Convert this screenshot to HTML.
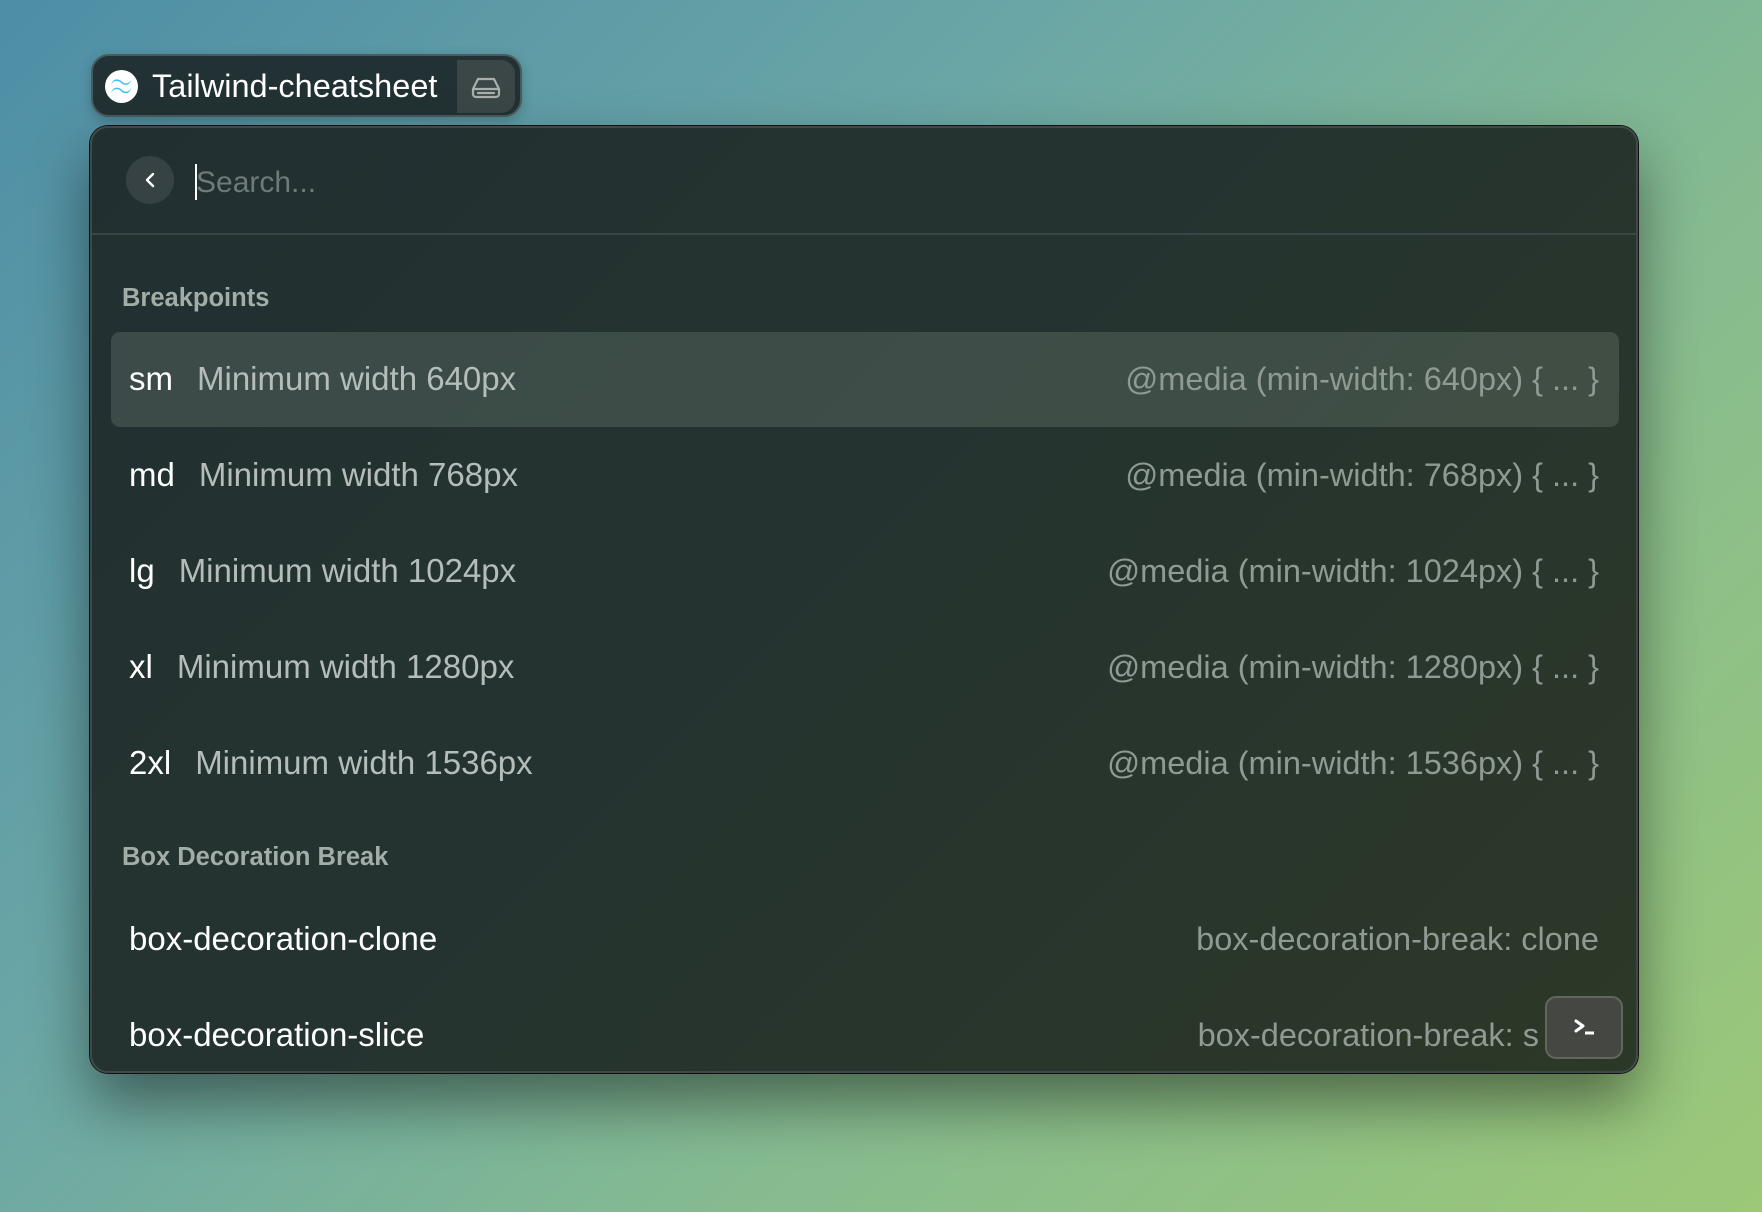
<!DOCTYPE html>
<html><head><meta charset="utf-8"><style>
*{margin:0;padding:0;box-sizing:border-box}
html,body{width:1762px;height:1212px;overflow:hidden}
body{font-family:"Liberation Sans",sans-serif;position:relative;
background:linear-gradient(135deg,#4e8ea6 0%,#6aa6a6 35%,#86bb90 65%,#9cc877 100%);}
.pill{position:absolute;left:91px;top:54px;width:431px;height:63px;border-radius:18px;background:#223234;border:2px solid #4b5a5c;box-shadow:0 4px 12px rgba(0,0,0,.2)}
.pill .logo{position:absolute;left:12px;top:14px;width:33px;height:33px;border-radius:50%;background:#fff}
.pill .t{position:absolute;left:59px;top:11px;font-size:32.5px;color:#fff;line-height:38px}
.pill .b{position:absolute;left:364px;top:4px;width:58px;height:53px;background:#3a4746;border-radius:0 14px 14px 0}
.panel{position:absolute;left:90px;top:126px;width:1548px;height:947px;border-radius:18px;
background:linear-gradient(135deg,#212f31 0%,#253330 45%,#2c3827 100%);border:2px solid #3d4a48;
box-shadow:0 0 0 1px #111,0 30px 60px rgba(0,0,0,.45);overflow:hidden}
.back{position:absolute;left:34px;top:28px;width:48px;height:48px;border-radius:50%;background:#364244}
.caret{position:absolute;left:103px;top:36px;width:2px;height:36px;background:#fff}
.search{position:absolute;left:104px;top:35px;font-size:30px;color:#6f7a78;line-height:40px}
.div{position:absolute;left:0;right:0;top:105px;height:2px;background:#3a4645}
.h{position:absolute;left:30px;font-size:25.5px;font-weight:bold;color:#a3ada8;line-height:30px}
.row{position:absolute;left:19px;width:1508px;height:95px;border-radius:9px}
.row.sel{background:rgba(110,125,115,.35)}
.row .l{position:absolute;left:18px;top:28px;font-size:33px;line-height:38px;color:#fff}
.row .l span{color:#b4bdb9;margin-left:24px}
.row .r{position:absolute;right:20px;top:28px;font-size:32.5px;line-height:38px;color:#8f9a93;white-space:nowrap}
.term{position:absolute;left:1453px;top:868px;width:78px;height:63px;border-radius:11px;background:#454842;border:2px solid #62665f}
</style></head><body>
<div class="pill">
 <div class="logo"><svg width="33" height="33" viewBox="0 0 32 32"><path d="M6 14c1.6-4.5 4.3-5.6 7.6-4.5 2.2.7 3.2 2.8 5.4 3.3 2.7.7 4.9-.5 6.6-3.3-1.6 4.5-4.3 5.6-7.6 4.5-2.2-.7-3.2-2.8-5.4-3.3-2.7-.7-4.9.5-6.6 3.3zM6 22c1.6-4.5 4.3-5.6 7.6-4.5 2.2.7 3.2 2.8 5.4 3.3 2.7.7 4.9-.5 6.6-3.3-1.6 4.5-4.3 5.6-7.6 4.5-2.2-.7-3.2-2.8-5.4-3.3-2.7-.7-4.9.5-6.6 3.3z" fill="#38bdf8"/></svg></div>
 <div class="t">Tailwind-cheatsheet</div>
 <div class="b"><svg width="58" height="53" viewBox="0 0 58 53"><path d="M16 29l5-10h16l5 10v5a3 3 0 0 1-3 3H19a3 3 0 0 1-3-3z M16 29h26 M21 33h16" fill="none" stroke="#a8b0ad" stroke-width="2.2" stroke-linejoin="round" stroke-linecap="round"/></svg></div>
</div>
<div class="panel">
 <div class="back"><svg width="48" height="48" viewBox="0 0 48 48"><path d="M27 18l-6 6 6 6" fill="none" stroke="#fff" stroke-width="2.4" stroke-linecap="round" stroke-linejoin="round"/></svg></div>
 <div class="caret"></div>
 <div class="search">Search...</div>
 <div class="div"></div>
 <div class="h" style="top:155px">Breakpoints</div>
 <div class="row sel" style="top:204px"><div class="l">sm<span>Minimum width 640px</span></div><div class="r">@media (min-width: 640px) { ... }</div></div>
 <div class="row" style="top:300px"><div class="l">md<span>Minimum width 768px</span></div><div class="r">@media (min-width: 768px) { ... }</div></div>
 <div class="row" style="top:396px"><div class="l">lg<span>Minimum width 1024px</span></div><div class="r">@media (min-width: 1024px) { ... }</div></div>
 <div class="row" style="top:492px"><div class="l">xl<span>Minimum width 1280px</span></div><div class="r">@media (min-width: 1280px) { ... }</div></div>
 <div class="row" style="top:588px"><div class="l">2xl<span>Minimum width 1536px</span></div><div class="r">@media (min-width: 1536px) { ... }</div></div>
 <div class="h" style="top:714px">Box Decoration Break</div>
 <div class="row" style="top:764px"><div class="l">box-decoration-clone</div><div class="r">box-decoration-break: clone</div></div>
 <div class="row" style="top:860px"><div class="l">box-decoration-slice</div><div class="r" style="right:80px">box-decoration-break: s</div></div>
 <div class="term"><svg width="74" height="59" viewBox="0 0 74 59"><path d="M29 23l7 5-7 5" fill="none" stroke="#fff" stroke-width="3" stroke-linecap="round" stroke-linejoin="round"/><path d="M38 35h9" stroke="#fff" stroke-width="3"/></svg></div>
</div>
</body></html>
